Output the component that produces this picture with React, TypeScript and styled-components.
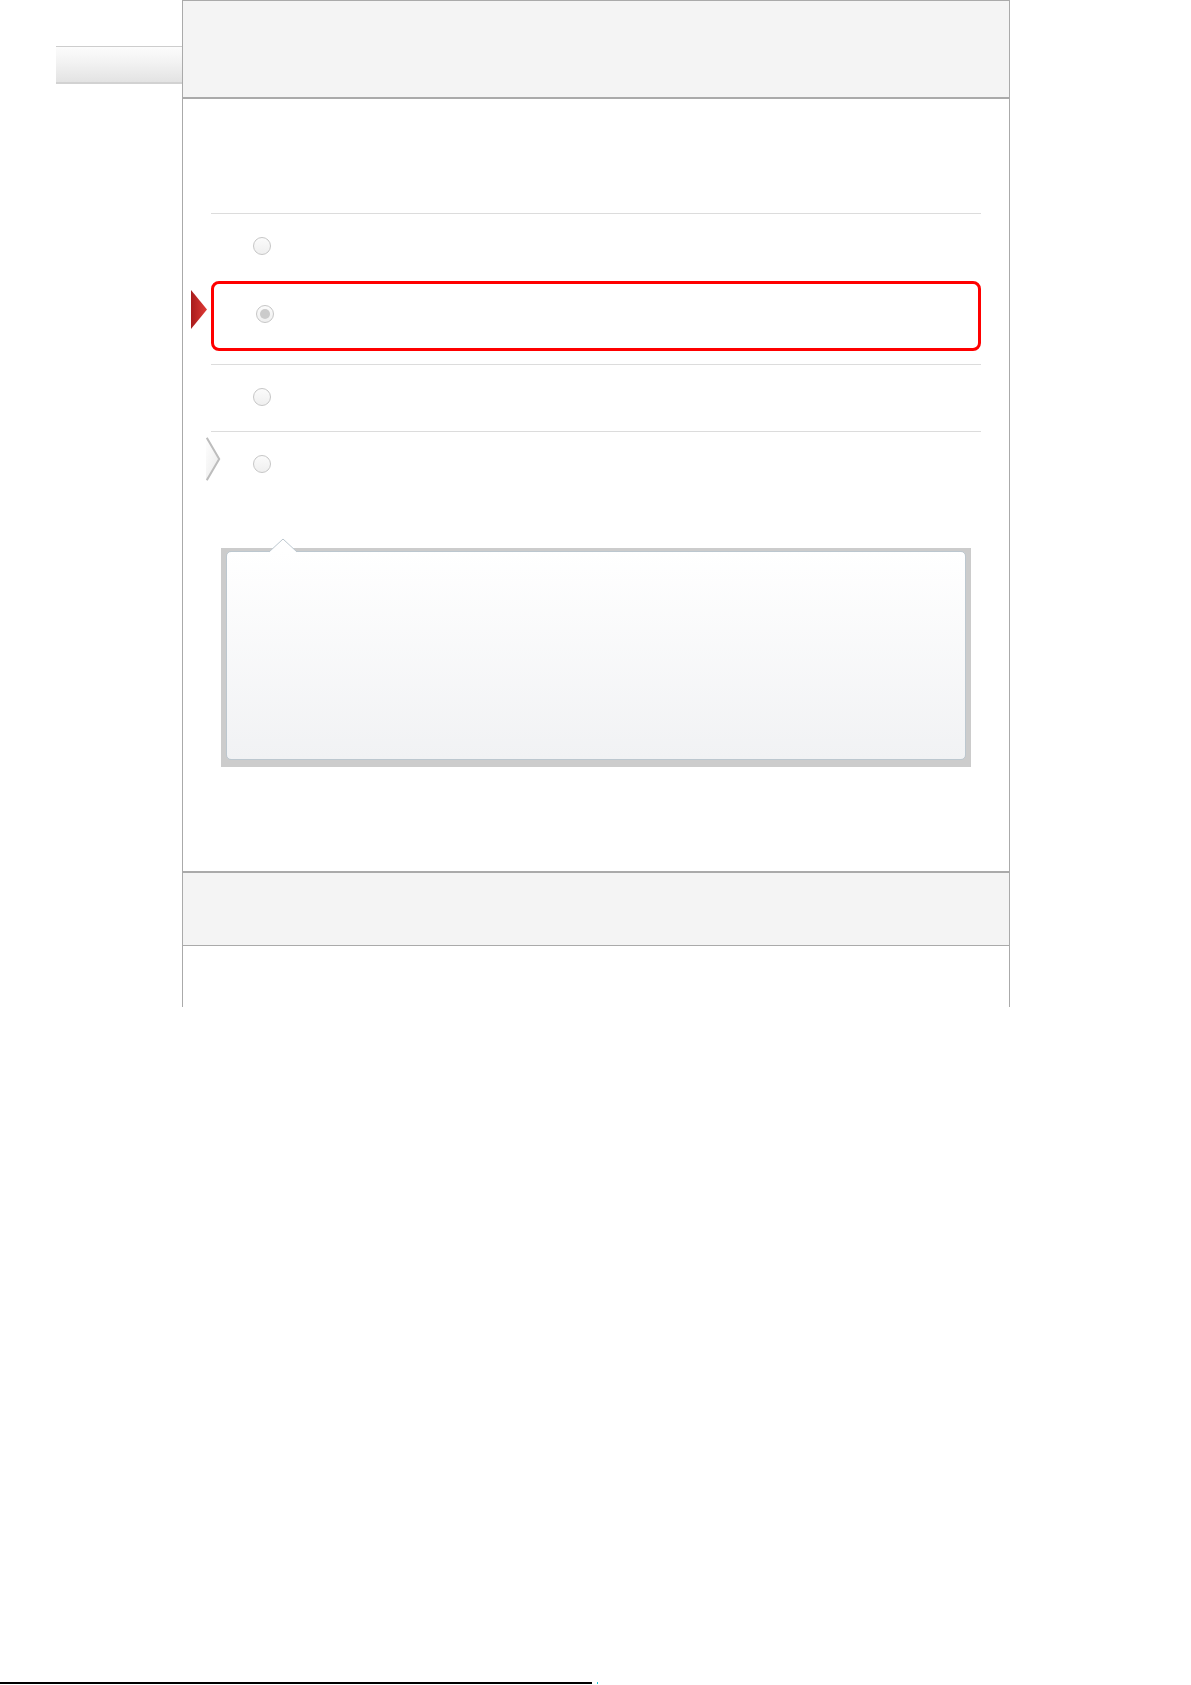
import React from 'react';
import styled, { createGlobalStyle } from 'styled-components';

const GlobalStyle = createGlobalStyle`
  html, body {
    margin: 0;
    padding: 0;
    background: #fff;
    font-family: 'Liberation Sans', Arial, sans-serif;
  }
`;

const Page = styled.div`
  height: 1685px;
  display: flex;
  flex-direction: column;
  justify-content: space-between;
`;

const Stage = styled.div`
  display: flex;
  align-items: flex-start;
`;

const SideTab = styled.div`
  margin: 46px 0 0 56px;
  width: 126px;
  height: 35px;
  border-top: 1px solid #cdcdcd;
  border-bottom: 2px solid #d2d2d2;
  background: linear-gradient(#fcfcfc, #f2f2f2 45%, #e3e3e3);
`;

const Panel = styled.div`
  width: 826px;
  height: 1006px;
  border: 1px solid #aaa;
  border-bottom: none;
  display: flex;
  flex-direction: column;
`;

const PanelHeader = styled.div<{ $top?: boolean }>`
  height: ${(p) => (p.$top ? 96 : 72)}px;
  background: #f4f4f4;
  border-top: ${(p) => (p.$top ? 'none' : '2px solid #aaa')};
  border-bottom: ${(p) => (p.$top ? '2px' : '1px')} solid #aaa;
  flex-shrink: 0;
`;

const PanelBody = styled.div`
  padding: 114px 28px 0;
  display: flex;
  flex-direction: column;
`;

const PanelRest = styled.div`
  flex: 1;
`;

const OptionRow = styled.div`
  position: relative;
  height: 67px;
  border-top: 1px solid #dcdcdc;
  display: flex;
  align-items: center;
  padding: 0 0 3px 42px;
  box-sizing: border-box;
  &:first-child {
    height: 68px;
  }
`;

const SelectedRow = styled.div`
  position: relative;
  height: 70px;
  margin-bottom: 13px;
  border: 3px solid #ff0000;
  border-radius: 8px;
  display: flex;
  align-items: center;
  padding: 0 0 4px 42px;
  box-sizing: border-box;
`;

const Radio = styled.span<{ $checked?: boolean }>`
  width: 18px;
  height: 18px;
  border-radius: 50%;
  border: 1px solid #c6c6c6;
  background: linear-gradient(#fbfbfb, #efefef);
  box-sizing: border-box;
  display: flex;
  align-items: center;
  justify-content: center;
  &::after {
    content: '';
    display: ${(p) => (p.$checked ? 'block' : 'none')};
    width: 10px;
    height: 10px;
    border-radius: 50%;
    background: #cbcbcb;
  }
`;

const Pointer = styled.svg<{ $left: number; $top: number }>`
  position: absolute;
  left: ${(p) => p.$left}px;
  top: ${(p) => p.$top}px;
`;

const Callout = styled.div`
  position: relative;
  margin: 50px 10px 0;
  height: 219px;
  background: #cccccc;
  padding: 3px 5px 7px;
  box-sizing: border-box;
`;

const CalloutInner = styled.div`
  height: 100%;
  border: 1px solid #bcc7cf;
  border-radius: 5px;
  background: linear-gradient(#ffffff, #f1f2f4);
  box-sizing: border-box;
`;

const Notch = styled.svg`
  position: absolute;
  left: 48px;
  top: -10px;
`;

const Spacer = styled.div<{ $h: number }>`
  height: ${(p) => p.$h}px;
  flex-shrink: 0;
`;

const Footer = styled.div`
  display: flex;
  align-items: flex-end;
  padding-bottom: 1px;
`;

const FootLine = styled.div`
  width: 592px;
  height: 2px;
  background: #000;
`;

const FootDot = styled.div`
  width: 1px;
  height: 2px;
  margin-left: 5px;
  background: #20c8d8;
`;

const RedArrow = () => (
  <Pointer $left={-23} $top={6} width="17" height="39" viewBox="0 0 17 39">
    <defs>
      <linearGradient id="ra" x1="0" y1="0" x2="1" y2="0">
        <stop offset="0" stopColor="#a81c1c" />
        <stop offset="1" stopColor="#e03a36" />
      </linearGradient>
    </defs>
    <polygon points="0,0 16,19.5 0,39" fill="url(#ra)" />
  </Pointer>
);

const GreyChevron = () => (
  <Pointer $left={-5} $top={5} width="15" height="44" viewBox="0 0 15 44">
    <defs>
      <linearGradient id="gc" x1="0" y1="0" x2="1" y2="1">
        <stop offset="0" stopColor="#ffffff" />
        <stop offset="1" stopColor="#e8e8e8" />
      </linearGradient>
    </defs>
    <polygon points="0,0 14,22 0,44" fill="url(#gc)" />
    <polyline points="0.8,0.8 13.2,22 0.8,43.2" fill="none" stroke="#bdbdbd" strokeWidth="2" />
  </Pointer>
);

const App: React.FC = () => {
  return (
    <>
      <GlobalStyle />
      <Page>
        <Stage>
          <SideTab />
          <Panel>
            <PanelHeader $top />
            <PanelBody>
              <OptionRow>
                <Radio />
              </OptionRow>
              <SelectedRow>
                <RedArrow />
                <Radio $checked />
              </SelectedRow>
              <OptionRow>
                <Radio />
              </OptionRow>
              <OptionRow>
                <GreyChevron />
                <Radio />
              </OptionRow>
              <Callout>
                <Notch width="28" height="15" viewBox="0 0 28 15">
                  <polygon points="0,14 14,1 28,14" fill="#ffffff" />
                  <polyline points="0,14 14,1 28,14" fill="none" stroke="#bcc7cf" strokeWidth="1" />
                </Notch>
                <CalloutInner />
              </Callout>
              <Spacer $h={104} />
            </PanelBody>
            <PanelHeader />
            <PanelRest />
          </Panel>
        </Stage>
        <Footer>
          <FootLine />
          <FootDot />
        </Footer>
      </Page>
    </>
  );
};

export default App;
